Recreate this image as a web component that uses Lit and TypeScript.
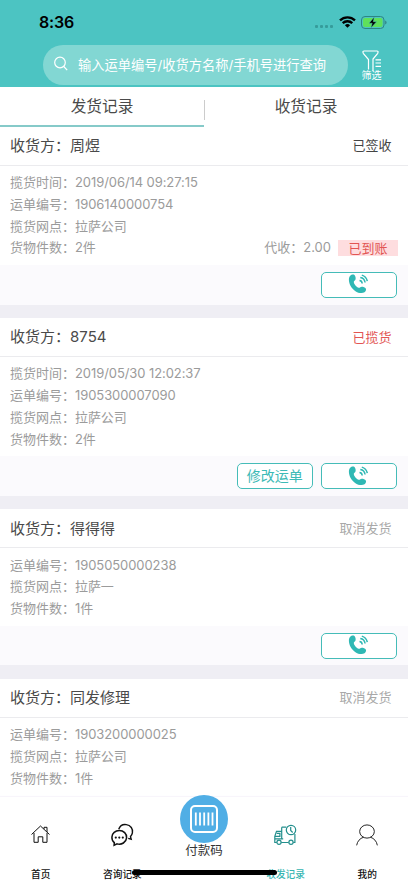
import { LitElement, html, css, svg, nothing } from "lit";
import { customElement, property } from "lit/decorators.js";

interface Row {
  label: string;
  value: string;
}

interface RecordItem {
  name: string;
  status: string;
  tone: "done" | "alert" | "muted";
  rows: Row[];
  collect?: string;
  editable?: boolean;
}

const records: RecordItem[] = [
  {
    name: "周煜",
    status: "已签收",
    tone: "done",
    collect: "2.00",
    rows: [
      { label: "揽货时间：", value: "2019/06/14 09:27:15" },
      { label: "运单编号：", value: "1906140000754" },
      { label: "揽货网点：", value: "拉萨公司" },
      { label: "货物件数：", value: "2件" },
    ],
  },
  {
    name: "8754",
    status: "已揽货",
    tone: "alert",
    editable: true,
    rows: [
      { label: "揽货时间：", value: "2019/05/30 12:02:37" },
      { label: "运单编号：", value: "1905300007090" },
      { label: "揽货网点：", value: "拉萨公司" },
      { label: "货物件数：", value: "2件" },
    ],
  },
  {
    name: "得得得",
    status: "取消发货",
    tone: "muted",
    rows: [
      { label: "运单编号：", value: "1905050000238" },
      { label: "揽货网点：", value: "拉萨一" },
      { label: "货物件数：", value: "1件" },
    ],
  },
  {
    name: "同发修理",
    status: "取消发货",
    tone: "muted",
    rows: [
      { label: "运单编号：", value: "1903200000025" },
      { label: "揽货网点：", value: "拉萨公司" },
      { label: "货物件数：", value: "1件" },
    ],
  },
];

const phoneIcon = html`<svg width="20" height="20" viewBox="0 0 20 20" fill="none">
  <path fill="#2fb8b4" d="M2.200 1.700C3.300.5 5.400.1 6.500 1c.9.9 1.500 3.200 1 4.500-.4 1-1.700 1.400-1.700 2.400 0 1.900 2.900 5.500 4.900 5.900 1.100.2 1.900-.9 3-1 1.400 0 3.500.6 4.100 1.600.7 1.200-.1 3-1.300 3.900-2.300 1.500-6.200.9-9.400-1.400C3.200 14.300.8 9.600.9 5.600c0-1.500.4-2.900 1.300-3.900z"/>
  <path stroke="#2fb8b4" stroke-width="1.500" d="M11.500 6.500c1.700.2 2.600 1.300 2.700 3M12.300 3.500c2.800.4 4.400 2.200 4.800 5M13.800 1.100c3 .9 4.900 3.100 5.500 6"/>
</svg>`;

@customElement("record-card")
export class RecordCard extends LitElement {
  @property({ attribute: false }) item!: RecordItem;

  static styles = css`
    :host { display: block; flex: none; background: #fff; margin-bottom: 13.3px; }
    .head {
      box-sizing: border-box; height: 39px; padding: 1px 16.500px 0 10px;
      display: flex; align-items: center; justify-content: space-between;
      border-bottom: 1px solid #ebebee; font-size: 15px; color: #4a4a4a;
    }
    .status { font-size: 13px; }
    .done { color: #444; }
    .alert { color: #e25553; }
    .muted { color: #a8a8a8; }
    .body { padding: 6.300px 10px 6.200px; font-size: 13px; color: #9b9b9b; }
    .row { height: 21.75px; display: flex; align-items: center; white-space: nowrap; }
    .value { letter-spacing: -0.08px; }
    .collect { margin-left: auto; display: flex; align-items: center; }
    .paid {
      width: 60px; height: 16px; line-height: 16px; margin-left: 7px;
      text-align: center; background: #fedddf; color: #e25553;
    }
    .actions {
      height: 39.500px; box-sizing: border-box; padding-right: 11px; background: #fbfafd;
      display: flex; align-items: center; justify-content: flex-end; gap: 7.500px;
    }
    .btn {
      width: 76.500px; height: 26px; box-sizing: border-box; border: 1px solid #45bcb8;
      border-radius: 5px; background: #fff; color: #3dbab6; font-size: 14px;
      display: flex; align-items: center; justify-content: center;
    }
    .btn svg { margin: 0 2px 1px 0; }
  `;

  render() {
    const { name, status, tone, rows, collect, editable } = this.item;
    return html`
      <div class="head"><span>收货方：${name}</span><span class="status ${tone}">${status}</span></div>
      <div class="body">
        ${rows.map(
          (r, i) => html`<div class="row">
            <span>${r.label}</span><span class="value">${r.value}</span>
            ${collect && i === rows.length - 1
              ? html`<span class="collect">代收：${collect}<span class="paid">已到账</span></span>`
              : nothing}
          </div>`
        )}
      </div>
      <div class="actions">
        ${editable ? html`<div class="btn">修改运单</div>` : nothing}
        <div class="btn">${phoneIcon}</div>
      </div>
    `;
  }
}

const homeIcon = svg`<path d="M1.500 10.500 10.500 2l9 8.500M4 9v9.300h4.200v-5.500h4.600v5.500H17V9M14 3.300h3v4.700M14 3.300v1.800"/>`;
const chatIcon = svg`
  <path stroke-width="1.400" d="M7.700 5.200C9 1.700 12 .1 15.300.6c4.400.6 6.900 4.400 6.100 8.300-.3 1.500-.9 2.700-1.900 3.700l.7 2.600-3-.8"/>
  <path stroke-width="1.500" d="M3.300 18.700l-.2 2.500 3-1.300c4.500 1.300 9.100-1.700 9.500-6 .3-4.300-3-7.300-7.300-7.300-4 0-7.200 2.700-7.400 6.500-.1 2.300.8 4.300 2.400 5.600z"/>
  <g fill="#111" stroke="none"><circle cx="4.800" cy="13.600" r="1.100"/><circle cx="8.300" cy="13.600" r="1.100"/><circle cx="11.800" cy="13.600" r="1.100"/></g>`;
const truckIcon = svg`
  <path d="M2.800 18.500H.8v-6.200l1.700-5h5.200v7.500H.8M7.700 3.200v4.100M7.700 14.800h1.500M7.700 3.200h4.600M7.200 18.500h7.500M19.200 18.500h1.700V10M2.800 9.300h3.100v3H1.200"/>
  <circle cx="5" cy="18.300" r="2.100"/><circle cx="17" cy="18.300" r="2.100"/>
  <circle cx="17" cy="6" r="4.700"/><path d="M16.700 3v3.500l2 2"/>`;
const userIcon = svg`<ellipse cx="12" cy="8.200" rx="8" ry="7.200"/><path d="M.7 23.300c.8-4.600 3.600-7.600 7.600-8.900M23.300 23.300c-.8-4.600-3.600-7.600-7.600-8.900"/>`;

@customElement("app-root")
export class AppRoot extends LitElement {
  static styles = css`
    :host {
      display: flex; flex-direction: column; position: relative; width: 408px; height: 883px;
      overflow: hidden; background: #efeef4; color: #4a4a4a;
      font-family: Inter, "Noto Sans CJK SC", sans-serif; line-height: 1.200;
    }
    svg { display: block; flex: none; overflow: visible; }
    .top { flex: none; height: 87px; background: #4cc4c2; }
    .bar { height: 45px; display: flex; align-items: center; padding: 0 21.500px 0 39px; box-sizing: border-box; color: #000; }
    .time { flex: 1; font-size: 16px; font-weight: 600; letter-spacing: -0.2px; padding-top: 1px; }
    .dots { display: flex; gap: 2px; margin: 8px 6px 0 0; }
    .dots i { width: 3px; height: 3px; background: #369c9b; border-radius: 1px; }
    .wifi { margin-right: 5px; margin-top: -1px; }
    .tools { display: flex; padding-left: 43px; }
    .search {
      width: 305px; height: 40px; box-sizing: border-box; border-radius: 20px; background: #82d7d3;
      display: flex; align-items: center; padding-left: 11px; color: #fff; font-size: 13.250px;
      gap: 10px; white-space: nowrap;
    }
    .search svg { margin-top: -3px; }
    .search span { padding-top: 1px; }
    .filter { width: 47px; display: flex; flex-direction: column; align-items: center; color: #fff; font-size: 10px; padding-top: 5px; }
    .filter span { line-height: 12px; margin-top: -2px; }
    .tabs { flex: none; height: 39.700px; box-sizing: border-box; display: flex; background: #fff; font-size: 15.700px; }
    .tab { flex: 1; display: flex; align-items: center; justify-content: center; box-sizing: border-box; border-bottom: 2px solid transparent; padding-top: 4px; }
    .tab.on { border-bottom-color: #86cac9; }
    .sep { width: 1px; height: 20px; margin: 13px -1px 0 0; background: #ccc; }
    .list { flex: 1; min-height: 0; overflow: hidden; display: flex; flex-direction: column; }
    .nav { flex: none; height: 86px; display: grid; grid-template-columns: repeat(5, 1fr); background: #fff; color: #111; position: relative; box-shadow: 0 -1px 1px #f8f5fb; }
    .item { display: flex; flex-direction: column; align-items: center; justify-content: space-between; padding: 27px 0 2.500px; box-sizing: border-box; height: 86px; font-size: 9.700px; font-weight: 500; white-space: nowrap; }
    .item svg { fill: none; stroke: #111; stroke-width: 1; }
    .item.on { color: #35b5b1; }
    .item.on svg { stroke: #248f8d; stroke-width: 1.200; margin-right: 2px; }
    .pay { display: flex; flex-direction: column; align-items: center; font-size: 12.500px; margin-top: -2px; color: #333; }
    .disc { width: 48px; height: 48px; border-radius: 50%; background: #50aee5; display: flex; align-items: center; justify-content: center; }
    .home-line { position: absolute; left: 132px; top: 72.500px; width: 145px; height: 5px; border-radius: 3px; background: #000; }
  `;

  render() {
    return html`
      <div class="top">
        <div class="bar">
          <span class="time">8:36</span>
          <span class="dots"><i></i><i></i><i></i><i></i></span>
          <svg class="wifi" width="17" height="12" viewBox="0 0 17 12">
            <g fill="none" stroke="#000" stroke-width="2.300"><path d="M1 4.400a10.700 10.700 0 0 1 15 0M3.700 7.200a6.900 6.900 0 0 1 9.600 0"/></g>
            <path d="M8.500 11.800 5.900 9.300a3.700 3.700 0 0 1 5.200 0z"/>
          </svg>
          <svg width="26" height="13" viewBox="0 0 26 13">
            <rect x=".5" y=".5" width="22.500" height="12" rx="3.500" fill="none" stroke="#2d8584"/>
            <rect x="2" y="2" width="19.500" height="9" rx="2" fill="#5fe05c"/>
            <path d="M24.300 4.500v4c1.600-.6 1.600-3.400 0-4z" fill="#2d7776"/>
            <path d="M13.300 1 8 7.200h3.200L9.800 12l5.800-6.300h-3.300z" stroke="#4cc4c2" stroke-width=".5"/>
          </svg>
        </div>
        <div class="tools">
          <div class="search">
            <svg width="14" height="15" viewBox="0 0 14 15" fill="none" stroke="#fff" stroke-width="1.200"><circle cx="6" cy="6.500" r="5.300"/><path d="m9.800 10.500 3.400 3.700"/></svg>
            <span>输入运单编号/收货方名称/手机号进行查询</span>
          </div>
          <div class="filter">
            <svg width="20" height="21" viewBox="0 0 20 21" fill="none" stroke="#fff" stroke-width="1.200">
              <path d="M6.500 19.500V9.500L1.300 3.300Q.2 1 2.200 1h12.600q2 0 .9 2.300L11 9v12M13.500 9.800h5.500M13.500 13h5.500M13.500 16.300h5.500"/>
            </svg>
            <span>筛选</span>
          </div>
        </div>
      </div>
      <div class="tabs"><div class="tab on">发货记录</div><div class="sep"></div><div class="tab">收货记录</div></div>
      <div class="list">${records.map((r) => html`<record-card .item=${r}></record-card>`)}</div>
      <div class="nav">
        <div class="item"><svg width="21" height="21" viewBox="0 0 21 21">${homeIcon}</svg><span>首页</span></div>
        <div class="item"><svg width="22" height="22" viewBox="0 0 22 22">${chatIcon}</svg><span>咨询记录</span></div>
        <div class="pay">
          <div class="disc">
            <svg width="28" height="28" viewBox="0 0 28 28" fill="none" stroke="#fff" stroke-width="2"><rect x="1" y="1" width="26" height="26" rx="4"/><path stroke-width="1.800" d="M5.800 7.500v13M10 7.500v13M14.200 7.500v13M18.400 7.500v13M22.500 7.500v13"/></svg>
          </div>
          <span>付款码</span>
        </div>
        <div class="item on"><svg width="22" height="22" viewBox="0 0 22 22">${truckIcon}</svg><span>收发记录</span></div>
        <div class="item"><svg width="22" height="22" viewBox="0 0 24 24">${userIcon}</svg><span>我的</span></div>
        <div class="home-line"></div>
      </div>
    `;
  }
}
